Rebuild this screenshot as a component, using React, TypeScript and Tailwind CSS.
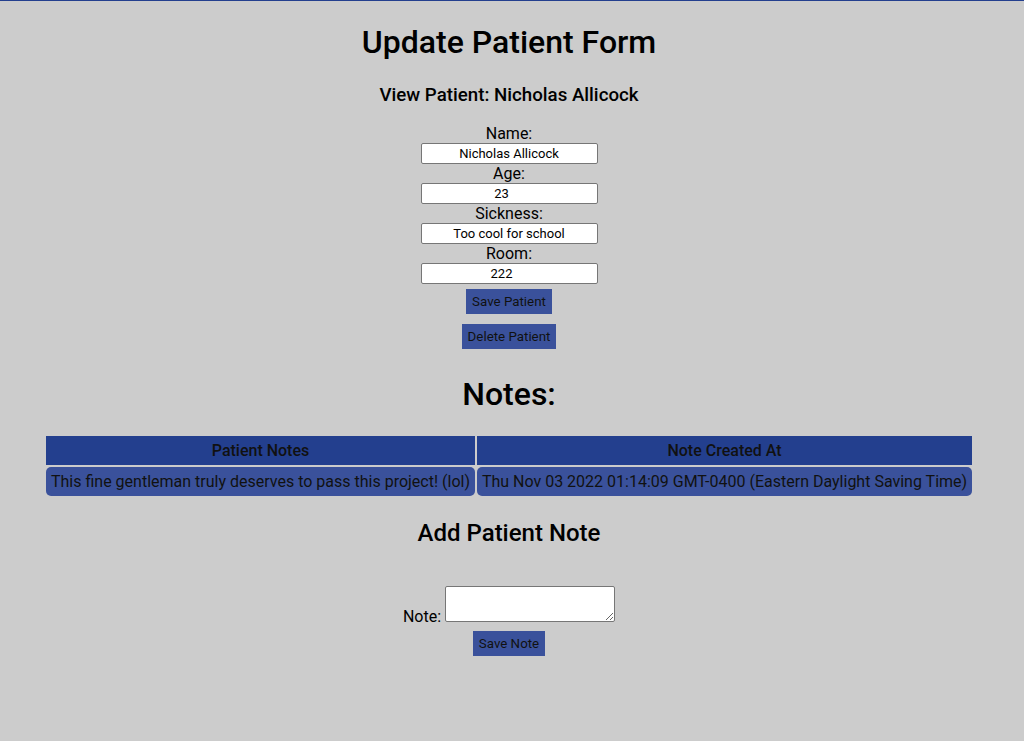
export default function App() {
  return (
    <div className="min-h-[741px] bg-[#cccccc] border-t border-[#233f8e] font-['Roboto',sans-serif] text-black">
      <div className="w-[1018px] flex flex-col items-center">
        <h1 className="mt-[23px] text-[32px] leading-[37px] font-medium">Update Patient Form</h1>
        <h3 className="mt-[23px] text-[18.72px] leading-[22px] font-medium">
          View Patient: Nicholas Allicock
        </h3>

        {/* Patient form */}
        <form className="mt-[18px] flex flex-col items-center">
          <label className="text-base leading-[19px]">Name:</label>
          <input
            type="text"
            defaultValue="Nicholas Allicock"
            className="w-[177px] h-[21px] bg-white border border-[#767676] rounded-[2px] text-[13px] text-center outline-none"
          />
          <label className="text-base leading-[19px]">Age:</label>
          <input
            type="number"
            defaultValue="23"
            className="w-[177px] h-[21px] bg-white border border-[#767676] rounded-[2px] text-[13px] text-center outline-none"
          />
          <label className="text-base leading-[19px]">Sickness:</label>
          <input
            type="text"
            defaultValue="Too cool for school"
            className="w-[177px] h-[21px] bg-white border border-[#767676] rounded-[2px] text-[13px] text-center outline-none"
          />
          <label className="text-base leading-[19px]">Room:</label>
          <input
            type="number"
            defaultValue="222"
            className="w-[177px] h-[21px] bg-white border border-[#767676] rounded-[2px] text-[13px] text-center outline-none"
          />
          <button type="button" className="mt-[5px] h-[25px] px-[6px] bg-[#3a519b] text-[13.33px] text-[#111]">
            Save Patient
          </button>
          <button type="button" className="mt-[10px] h-[25px] px-[6px] bg-[#3a519b] text-[13.33px] text-[#111]">
            Delete Patient
          </button>
        </form>

        <h1 className="mt-[27px] text-[32px] leading-[37px] font-medium">Notes:</h1>

        {/* Notes table */}
        <table className="mt-[21px] w-[930px] border-separate border-spacing-[2px] text-base">
          <thead>
            <tr>
              <th className="w-[429px] h-[29px] bg-[#233f8e] font-medium text-[#111]">Patient Notes</th>
              <th className="h-[29px] bg-[#233f8e] font-medium text-[#111]">Note Created At</th>
            </tr>
          </thead>
          <tbody>
            <tr>
              <td className="h-[29px] bg-[#3a519b] rounded-[5px] px-[4px] text-center text-[#111] whitespace-nowrap">
                This fine gentleman truly deserves to pass this project! (lol)
              </td>
              <td className="h-[29px] bg-[#3a519b] rounded-[5px] px-[4px] text-center text-[#111] whitespace-nowrap">
                Thu Nov 03 2022 01:14:09 GMT-0400 (Eastern Daylight Saving Time)
              </td>
            </tr>
          </tbody>
        </table>

        <h2 className="mt-[21px] text-[24px] leading-[28px] font-medium">Add Patient Note</h2>

        {/* Add note */}
        <form className="mt-[39px] flex flex-col items-center">
          <div className="flex items-end gap-[4px]">
            <label className="text-base leading-[16px] -mb-[3px]">Note:</label>
            <textarea className="w-[170px] h-[36px] bg-white border border-[#767676] rounded-[2px] outline-none" />
          </div>
          <button type="button" className="mt-[9px] h-[25px] px-[6px] bg-[#3a519b] text-[13.33px] text-[#111]">
            Save Note
          </button>
        </form>
      </div>
    </div>
  );
}
